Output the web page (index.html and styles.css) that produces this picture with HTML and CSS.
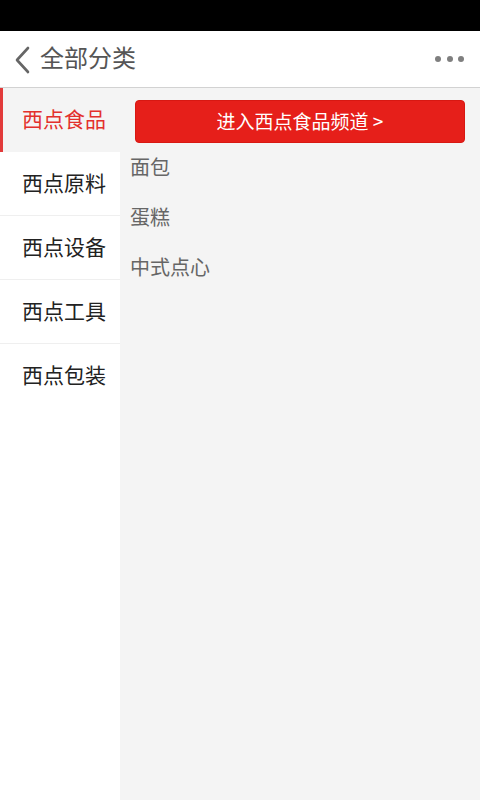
FILE: index.html
```html
<!DOCTYPE html>
<html lang="zh-CN">
<head>
<meta charset="utf-8">
<title>全部分类</title>
<link rel="stylesheet" href="styles.css">
</head>
<body>
<div class="app">
  <div class="statusbar"></div>
  <header class="header">
    <svg class="back" width="18" height="28" viewBox="0 0 18 28"><path d="M14 2 L3 14 L14 26" fill="none" stroke="#666" stroke-width="2.6" stroke-linecap="round" stroke-linejoin="round"/></svg>
    <h1 class="title">全部分类</h1>
    <div class="more"><span></span><span></span><span></span></div>
  </header>
  <div class="main">
    <nav class="sidebar">
      <div class="cat active">西点食品</div>
      <div class="cat">西点原料</div>
      <div class="cat">西点设备</div>
      <div class="cat">西点工具</div>
      <div class="cat last">西点包装</div>
    </nav>
    <section class="content">
      <a class="channel">进入西点食品频道 &gt;</a>
      <ul class="subs">
        <li>面包</li>
        <li>蛋糕</li>
        <li>中式点心</li>
      </ul>
    </section>
  </div>
</div>
</body>
</html>
```
FILE: styles.css
```css
* { box-sizing: border-box; margin: 0; padding: 0; }
html, body { width: 480px; height: 800px; overflow: hidden; }
body { font-family: "Noto Sans CJK SC", "Noto Sans", sans-serif; background: #fff; }
.app { display: flex; flex-direction: column; height: 800px; }
.statusbar { height: 31px; background: #000; flex: none; }
.header { height: 57px; flex: none; display: flex; align-items: center; background: #fff; border-bottom: 1px solid #d2d2d2; padding-left: 14px; }
.back { display: block; margin-top: 1px; }
.title { font-size: 24px; font-weight: normal; color: #555; margin-left: 8px; line-height: 1; padding-bottom: 4px; }
.more { margin-left: auto; margin-right: 16px; display: flex; gap: 5.5px; }
.more span { width: 6px; height: 6px; border-radius: 50%; background: #7f7f7f; }
.main { flex: 1; display: flex; }
.sidebar { width: 120px; flex: none; background: #fff; }
.cat { height: 64px; display: flex; align-items: center; padding-left: 22px; padding-bottom: 4px; font-size: 21px; color: #222; border-bottom: 1px solid #efefef; }
.cat.last { border-bottom: 0; }
.cat.active { height: 64px; background: #f4f4f4; color: #e3302c; border-left: 3px solid #e23a3a; padding-left: 19px; border-bottom: 0; }
.content { flex: 1; background: #f4f4f4; padding: 12px 15px 0 0; }
.channel { display: flex; align-items: center; justify-content: center; margin-left: 15px; height: 43px; padding-bottom: 3px; background: #e61f1a; border-radius: 4px; color: #fff; font-size: 19px; border: 1px solid #d81812; }
.subs { list-style: none; padding-left: 10px; }
.subs li { height: 50px; display: flex; align-items: center; padding-bottom: 4px; font-size: 20px; color: #666; }
```
